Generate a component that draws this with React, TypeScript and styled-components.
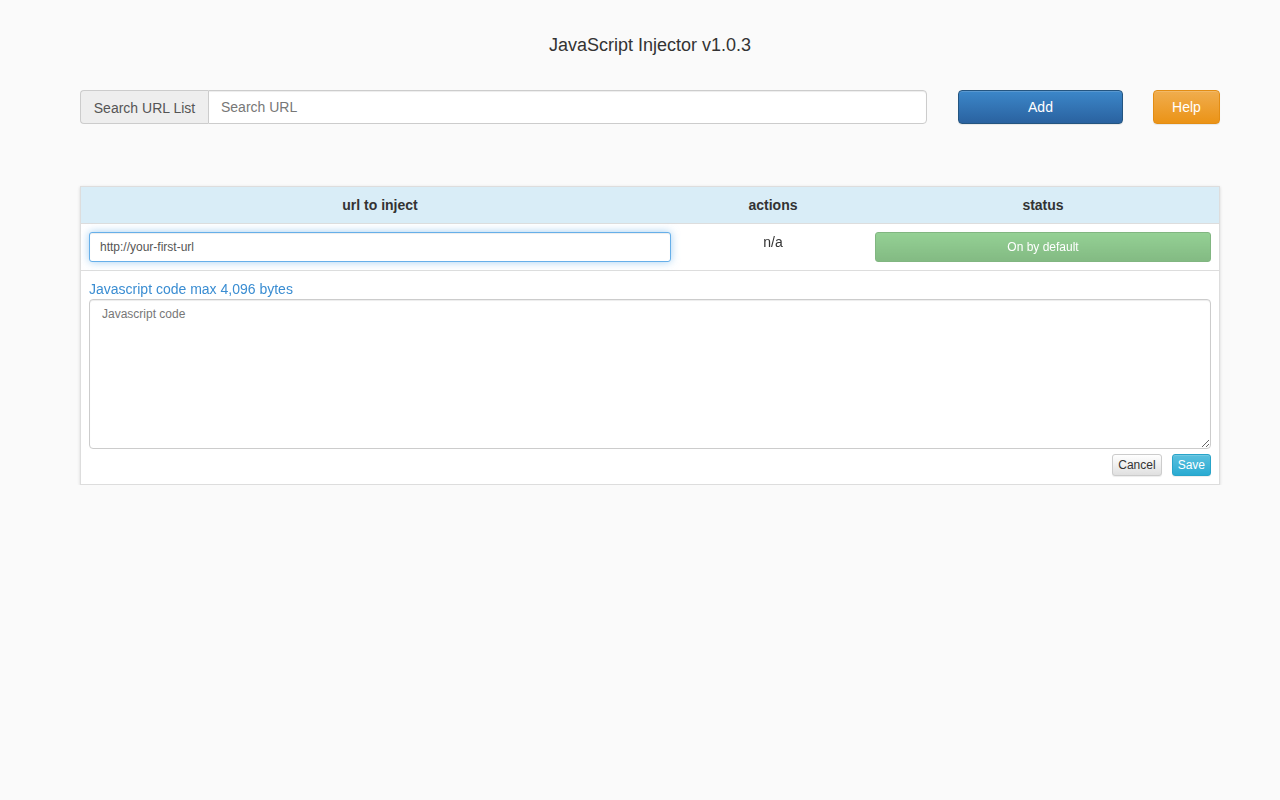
import React, { useEffect, useRef } from 'react';
import styled, { createGlobalStyle } from 'styled-components';

const GlobalStyle = createGlobalStyle`
  html, body {
    margin: 0;
    padding: 0;
    background: #fafafa;
  }
  body {
    font-family: "Liberation Sans", Arial, Helvetica, sans-serif;
    font-size: 14px;
    line-height: 1.42857;
    color: #333;
  }
  * {
    box-sizing: border-box;
  }
`;

const Page = styled.div`
  width: 1140px;
  margin-left: 80px;
  padding-top: 35px;
`;

const Title = styled.h1`
  margin: 0;
  font-size: 18px;
  font-weight: normal;
  line-height: 20px;
  text-align: center;
  color: #333;
`;

const Toolbar = styled.div`
  display: flex;
  align-items: stretch;
  margin-top: 35px;
  height: 34px;
`;

const InputGroup = styled.div`
  display: flex;
  width: 847px;
`;

const Addon = styled.span`
  display: block;
  width: 128px;
  padding: 6px 12px;
  line-height: 22px;
  text-align: center;
  background: #eee;
  border: 1px solid #ccc;
  border-right: 0;
  border-radius: 4px 0 0 4px;
  color: #555;
  font-size: 14px;
  white-space: nowrap;
`;

const SearchInput = styled.input`
  flex: 1;
  height: 34px;
  padding: 6px 12px;
  border: 1px solid #ccc;
  border-radius: 0 4px 4px 0;
  background: #fff;
  font: inherit;
  font-size: 14px;
  color: #555;
  box-shadow: inset 0 1px 1px rgba(0, 0, 0, 0.075);
  outline: none;
  &::placeholder {
    color: #777;
  }
`;

type Tone = 'primary' | 'warning' | 'success' | 'default' | 'info';

const tones: Record<Tone, { from: string; to: string; border: string; color: string }> = {
  primary: { from: '#3c87c9', to: '#2a62a0', border: '#245580', color: '#fff' },
  warning: { from: '#f0ad4e', to: '#eb9316', border: '#e38d13', color: '#fff' },
  success: { from: '#5cb85c', to: '#419641', border: '#3e8f3e', color: '#fff' },
  default: { from: '#ffffff', to: '#e0e0e0', border: '#ccc', color: '#333' },
  info: { from: '#5bc0de', to: '#2aabd2', border: '#28a4c9', color: '#fff' },
};

const Button = styled.button<{ $tone: Tone; $small?: boolean; $width?: number }>`
  display: inline-flex;
  align-items: center;
  justify-content: center;
  width: ${(p) => (p.$width ? `${p.$width}px` : 'auto')};
  padding: ${(p) => (p.$small ? '1px 5px' : '6px 12px')};
  font-family: inherit;
  font-size: ${(p) => (p.$small ? '12px' : '14px')};
  line-height: ${(p) => (p.$small ? '18px' : '20px')};
  color: ${(p) => tones[p.$tone].color};
  background-image: linear-gradient(
    to bottom,
    ${(p) => tones[p.$tone].from} 0,
    ${(p) => tones[p.$tone].to} 100%
  );
  border: 1px solid ${(p) => tones[p.$tone].border};
  border-radius: ${(p) => (p.$small ? '3px' : '4px')};
  box-shadow: inset 0 1px 0 rgba(255, 255, 255, 0.15), 0 1px 1px rgba(0, 0, 0, 0.075);
  cursor: pointer;
  &:disabled {
    opacity: 0.65;
    cursor: not-allowed;
    box-shadow: none;
  }
`;

const AddButton = styled(Button)`
  margin-left: 31px;
`;

const HelpButton = styled(Button)`
  margin-left: 30px;
`;

const Panel = styled.div`
  margin-top: 62px;
  background: #fff;
  border: 1px solid #ddd;
  box-shadow: 0 1px 3px rgba(0, 0, 0, 0.15);
`;

const Grid = styled.div`
  display: grid;
  grid-template-columns: 598px 188px 1fr;
`;

const HeadCell = styled.div`
  padding: 8px;
  height: 36px;
  background: #d9edf7;
  font-weight: bold;
  text-align: center;
  line-height: 21px;
`;

const Cell = styled.div<{ $center?: boolean }>`
  padding: 8px;
  border-top: 1px solid #ddd;
  text-align: ${(p) => (p.$center ? 'center' : 'left')};
  line-height: 20px;
`;

const UrlInput = styled.input`
  display: block;
  width: 100%;
  height: 30px;
  padding: 5px 10px;
  font: inherit;
  font-size: 12px;
  color: #555;
  background: #fff;
  border: 1px solid #66afe9;
  border-radius: 3px;
  outline: 0;
  box-shadow: inset 0 1px 1px rgba(0, 0, 0, 0.075), 0 0 8px rgba(102, 175, 233, 0.6);
`;

const StatusButton = styled(Button)`
  width: 100%;
  height: 30px;
  padding: 5px 10px;
  font-size: 12px;
  border-radius: 3px;
`;

const CodeSection = styled.div`
  border-top: 1px solid #ddd;
  padding: 8px;
`;

const CodeLabel = styled.div`
  color: #3a8dd2;
  font-size: 14px;
  line-height: 20px;
`;

const CodeArea = styled.textarea`
  display: block;
  width: 100%;
  height: 150px;
  padding: 6px 12px;
  font: inherit;
  font-size: 12px;
  color: #555;
  background: #fff;
  border: 1px solid #ccc;
  border-radius: 4px;
  box-shadow: inset 0 1px 1px rgba(0, 0, 0, 0.075);
  outline: none;
  &::placeholder {
    color: #777;
  }
`;

const Actions = styled.div`
  display: flex;
  justify-content: flex-end;
  gap: 10px;
  margin-top: 5px;
`;

export default function App() {
  const urlRef = useRef<HTMLInputElement>(null);

  useEffect(() => {
    const el = urlRef.current;
    if (el) {
      el.focus();
      el.setSelectionRange(7, 7);
    }
  }, []);

  return (
    <>
      <GlobalStyle />
      <Page>
        <Title>JavaScript Injector v1.0.3</Title>
        <Toolbar>
          <InputGroup>
            <Addon>Search URL List</Addon>
            <SearchInput placeholder="Search URL" />
          </InputGroup>
          <AddButton $tone="primary" $width={165}>
            Add
          </AddButton>
          <HelpButton $tone="warning" $width={67}>
            Help
          </HelpButton>
        </Toolbar>

        <Panel>
          <Grid>
            <HeadCell>url to inject</HeadCell>
            <HeadCell>actions</HeadCell>
            <HeadCell>status</HeadCell>
            <Cell>
              <UrlInput ref={urlRef} defaultValue="http://your-first-url" />
            </Cell>
            <Cell $center>n/a</Cell>
            <Cell>
              <StatusButton $tone="success" disabled>
                On by default
              </StatusButton>
            </Cell>
          </Grid>
          <CodeSection>
            <CodeLabel>Javascript code max 4,096 bytes</CodeLabel>
            <CodeArea placeholder="Javascript code" />
            <Actions>
              <Button $tone="default" $small>
                Cancel
              </Button>
              <Button $tone="info" $small>
                Save
              </Button>
            </Actions>
          </CodeSection>
        </Panel>
      </Page>
    </>
  );
}
